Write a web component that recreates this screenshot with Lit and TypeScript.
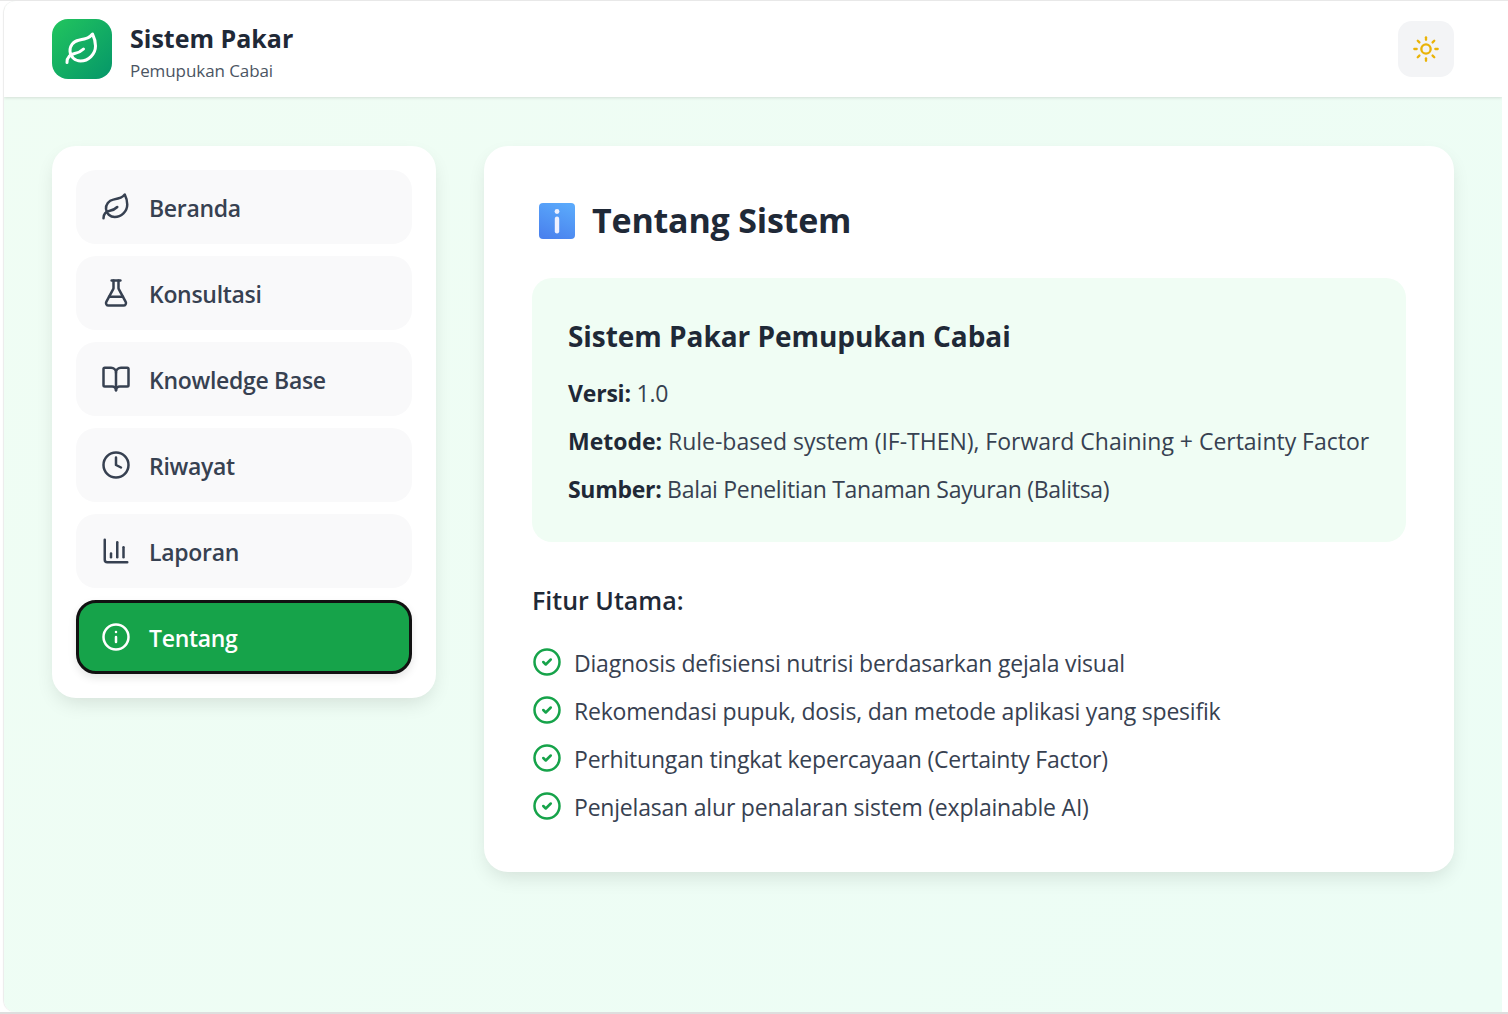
import { LitElement, html, css, svg } from "lit";
import { customElement } from "lit/decorators.js";

const ICONS: Record<string, unknown> = {
  leaf: svg`<path d="M11 20A7 7 0 0 1 9.8 6.1C15.5 5 17 4.48 19 2c1 2 2 4.18 2 8 0 5.5-4.78 10-10 10Z"/><path d="M2 21c0-3 1.85-5.36 5.08-6C9.5 14.52 12 13 13 12"/>`,
  flask: svg`<path d="M14 2v6a2 2 0 0 0 .245.96l5.51 10.08A2 2 0 0 1 18 22H6a2 2 0 0 1-1.755-2.96l5.51-10.08A2 2 0 0 0 10 8V2"/><path d="M6.453 15h11.094"/><path d="M8.5 2h7"/>`,
  book: svg`<path d="M12 7v14"/><path d="M3 18a1 1 0 0 1-1-1V4a1 1 0 0 1 1-1h5a4 4 0 0 1 4 4 4 4 0 0 1 4-4h5a1 1 0 0 1 1 1v13a1 1 0 0 1-1 1h-6a3 3 0 0 0-3 3 3 3 0 0 0-3-3z"/>`,
  clock: svg`<circle cx="12" cy="12" r="10"/><polyline points="12 6 12 12 16 14"/>`,
  chart: svg`<path d="M3 3v16a2 2 0 0 0 2 2h16"/><path d="M18 17V9"/><path d="M13 17V5"/><path d="M8 17v-3"/>`,
  info: svg`<circle cx="12" cy="12" r="10"/><path d="M12 16v-4"/><path d="M12 8h.01"/>`,
  sun: svg`<circle cx="12" cy="12" r="4"/><path d="M12 2v2"/><path d="M12 20v2"/><path d="m4.93 4.93 1.41 1.41"/><path d="m17.66 17.66 1.41 1.41"/><path d="M2 12h2"/><path d="M20 12h2"/><path d="m6.34 17.66-1.41 1.41"/><path d="m19.07 4.93-1.41 1.41"/>`,
  check: svg`<circle cx="12" cy="12" r="10"/><path d="m9 12 2 2 4-4"/>`,
};

const icon = (name: string, size: number) => html`<svg class="ic" width=${size} height=${size} viewBox="0 0 24 24" fill="none" stroke="currentColor" stroke-width="2" stroke-linecap="round" stroke-linejoin="round">${ICONS[name]}</svg>`;

const NAV = [
  ["leaf", "Beranda"],
  ["flask", "Konsultasi"],
  ["book", "Knowledge Base"],
  ["clock", "Riwayat"],
  ["chart", "Laporan"],
  ["info", "Tentang"],
];

const FEATURES = [
  "Diagnosis defisiensi nutrisi berdasarkan gejala visual",
  "Rekomendasi pupuk, dosis, dan metode aplikasi yang spesifik",
  "Perhitungan tingkat kepercayaan (Certainty Factor)",
  "Penjelasan alur penalaran sistem (explainable AI)",
];

@customElement("app-root")
export class AppRoot extends LitElement {
  static styles = css`
    :host {
      display: block;
      height: 1014px;
      box-sizing: border-box;
      padding: 0 6px 0 4px;
      background: #fff;
      border-top: 1px solid #e8e8e8;
      border-bottom: 2px solid #dedede;
      font-family: "Open Sans", "Noto Sans", sans-serif;
      color: #1f2937;
      overflow: hidden;
    }
    .ic { display: block; flex: none; }
    .frame {
      height: 100%;
      border-radius: 12px 0 0 12px;
      overflow: hidden;
      background: linear-gradient(135deg, #f0fdf4, #ecfdf5);
      box-shadow: -1px 0 1px rgba(0, 0, 0, 0.08);
      display: flex;
      flex-direction: column;
    }
    header {
      height: 96px;
      flex: none;
      box-sizing: border-box;
      background: #fff;
      padding: 0 48px;
      display: flex;
      align-items: center;
      justify-content: space-between;
      box-shadow: 0 1px 3px rgba(0, 0, 0, 0.12);
    }
    .brand { display: flex; align-items: center; gap: 18px; }
    .brand-text { padding-top: 2px; }
    .logo {
      width: 60px;
      height: 60px;
      border-radius: 16px;
      background: linear-gradient(135deg, #22c55e, #059669);
      color: #fff;
      display: flex;
      align-items: center;
      justify-content: center;
    }
    .brand h1 { margin: 0 0 1px; font-size: 25px; line-height: 40px; font-weight: 700; color: #1f2937; }
    .brand p { margin: 0; font-size: 17px; line-height: 24px; color: #4b5563; letter-spacing: -0.08px; }
    .theme {
      width: 56px;
      height: 56px;
      border-radius: 14px;
      background: #f3f4f6;
      color: #eab308;
      display: flex;
      align-items: center;
      justify-content: center;
    }
    main { flex: 1; padding: 49px 48px 0; display: flex; align-items: flex-start; gap: 48px; }
    nav {
      width: 384px;
      flex: none;
      box-sizing: border-box;
      background: #fff;
      border-radius: 24px;
      padding: 24px;
      display: flex;
      flex-direction: column;
      gap: 12px;
      box-shadow: 0 8px 20px -4px rgba(0, 0, 0, 0.12);
    }
    .item {
      height: 74px;
      box-sizing: border-box;
      border-radius: 20px;
      background: #f9f9fa;
      padding: 0 25px;
      display: flex;
      align-items: center;
      gap: 18px;
      color: #374151;
      font-size: 23px;
      font-weight: 600;
      letter-spacing: -0.3px;
    }
    .item span { padding-top: 2px; }
    .item.active {
      background: #16a34a;
      color: #fff;
      border: 3px solid #111;
      padding: 0 22px;
      box-shadow: 0 4px 8px rgba(0, 0, 0, 0.1);
    }
    .card {
      flex: 1;
      box-sizing: border-box;
      background: #fff;
      border-radius: 24px;
      padding: 48px 48px 46px;
      box-shadow: 0 8px 20px -4px rgba(0, 0, 0, 0.12);
    }
    h2 { margin: 0 0 30px; height: 54px; display: flex; align-items: center; gap: 17px; font-size: 34px; line-height: 54px; font-weight: 700; color: #1f2937; letter-spacing: -0.2px; }
    h2 span { margin-bottom: 3px; }
    .emoji { margin-left: 7px; flex: none; display: block; }
    .box { background: #f0fdf4; border-radius: 20px; padding: 36px 36px 35px; }
    .box h3 { margin: 0 0 18px; padding-top: 1px; font-size: 28px; line-height: 42px; font-weight: 700; color: #1f2937; letter-spacing: -0.05px; }
    .box p { margin: 0 0 12px; font-size: 23px; line-height: 36px; color: #374151; letter-spacing: -0.2px; white-space: nowrap; }
    .box p.wide { letter-spacing: -0.02px; }
    .box p.tight { letter-spacing: -0.3px; }
    .box p:last-child { margin-bottom: 0; }
    .box b { font-weight: 700; color: #1f2937; }
    h4 { margin: 36px 0 24px; font-size: 25px; line-height: 44px; font-weight: 600; color: #1f2937; }
    ul { list-style: none; margin: 0; padding: 0; display: flex; flex-direction: column; gap: 12px; }
    li { display: flex; align-items: center; gap: 12px; font-size: 23px; line-height: 36px; height: 36px; color: #374151; letter-spacing: -0.2px; }
    li span { margin-bottom: 2px; }
    li .ic { color: #16a34a; margin-bottom: 4px; }
  `;

  render() {
    return html`<div class="frame">
      <header>
        <div class="brand">
          <div class="logo">${icon("leaf", 36)}</div>
          <div class="brand-text">
            <h1>Sistem Pakar</h1>
            <p>Pemupukan Cabai</p>
          </div>
        </div>
        <div class="theme">${icon("sun", 28)}</div>
      </header>
      <main>
        <nav>
          ${NAV.map(([ic, label]) => html`<div class="item ${label === "Tentang" ? "active" : ""}">${icon(ic, 30)}<span>${label}</span></div>`)}
        </nav>
        <section class="card">
          <h2>
            <svg class="emoji" width="36" height="36" viewBox="0 0 36 36">
              <defs><linearGradient id="g" x1="0.7" y1="0" x2="0.3" y2="1"><stop offset="0" stop-color="#5aa9fb"/><stop offset="1" stop-color="#4a82ee"/></linearGradient></defs>
              <rect width="36" height="36" rx="4" fill="url(#g)"/>
              <circle cx="18" cy="8.5" r="2.4" fill="#eef0ff"/>
              <rect x="15.8" y="13.5" width="4.4" height="17" rx="2.2" fill="#eef0ff"/>
            </svg>
            <span>Tentang Sistem</span>
          </h2>
          <div class="box">
            <h3>Sistem Pakar Pemupukan Cabai</h3>
            <p><b>Versi:</b> 1.0</p>
            <p class="wide"><b>Metode:</b> Rule-based system (IF-THEN), Forward Chaining + Certainty Factor</p>
            <p class="tight"><b>Sumber:</b> Balai Penelitian Tanaman Sayuran (Balitsa)</p>
          </div>
          <h4>Fitur Utama:</h4>
          <ul>
            ${FEATURES.map((f) => html`<li>${icon("check", 30)}<span>${f}</span></li>`)}
          </ul>
        </section>
      </main>
    </div>`;
  }
}
